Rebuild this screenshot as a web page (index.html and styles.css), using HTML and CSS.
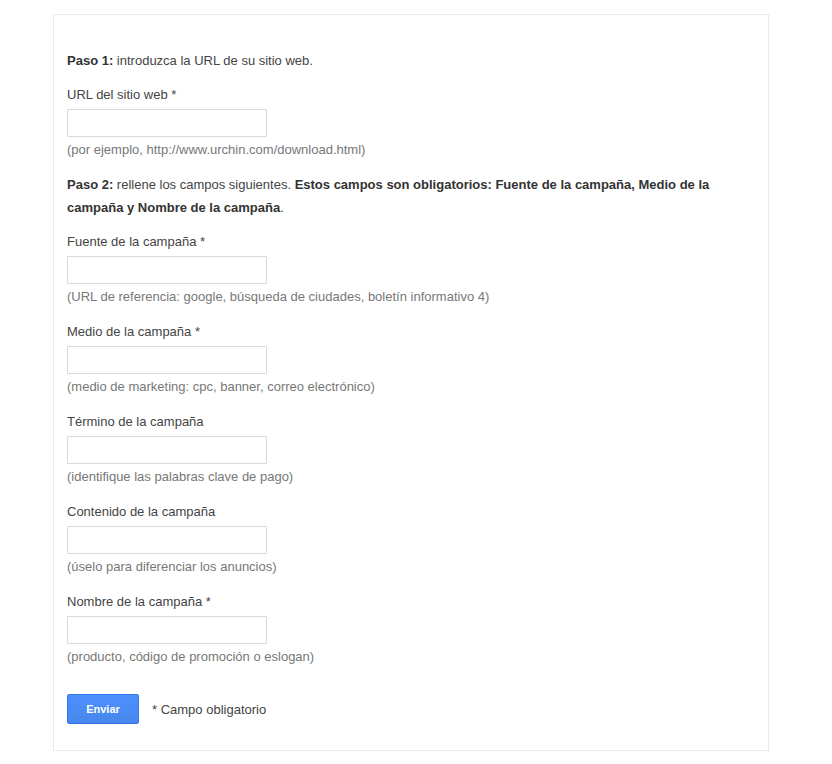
FILE: index.html
```html
<!DOCTYPE html>
<html lang="es">
<head>
<meta charset="utf-8">
<title>Creador de URL</title>
<link rel="stylesheet" href="styles.css">
</head>
<body>
<div class="panel">
  <form class="builder" onsubmit="return false;">
    <p class="step"><b>Paso 1:</b> introduzca la URL de su sitio web.</p>

    <div class="field field--tight">
      <label class="field-label" for="url">URL del sitio web *</label>
      <input class="field-input" id="url" type="text">
      <div class="field-hint">(por ejemplo, http://www.urchin.com/download.html)</div>
    </div>

    <p class="step"><b>Paso 2:</b> rellene los campos siguientes. <b>Estos campos son obligatorios: Fuente de la campaña, Medio de la campaña y Nombre de la campaña</b>.</p>

    <div class="field">
      <label class="field-label" for="source">Fuente de la campaña *</label>
      <input class="field-input" id="source" type="text">
      <div class="field-hint">(URL de referencia: google, búsqueda de ciudades, boletín informativo 4)</div>
    </div>

    <div class="field">
      <label class="field-label" for="medium">Medio de la campaña *</label>
      <input class="field-input" id="medium" type="text">
      <div class="field-hint">(medio de marketing: cpc, banner, correo electrónico)</div>
    </div>

    <div class="field">
      <label class="field-label" for="term">Término de la campaña</label>
      <input class="field-input" id="term" type="text">
      <div class="field-hint">(identifique las palabras clave de pago)</div>
    </div>

    <div class="field">
      <label class="field-label" for="content">Contenido de la campaña</label>
      <input class="field-input" id="content" type="text">
      <div class="field-hint">(úselo para diferenciar los anuncios)</div>
    </div>

    <div class="field">
      <label class="field-label" for="name">Nombre de la campaña *</label>
      <input class="field-input" id="name" type="text">
      <div class="field-hint">(producto, código de promoción o eslogan)</div>
    </div>

    <div class="actions">
      <button class="btn-submit" type="submit">Enviar</button>
      <span class="required-note">* Campo obligatorio</span>
    </div>
  </form>
</div>
</body>
</html>
```

FILE: styles.css
```css
html, body {
  margin: 0;
  padding: 0;
  background: #fff;
}

body {
  font-family: Arial, "Liberation Sans", sans-serif;
  font-size: 13px;
  color: #444;
}

.panel {
  width: 714px;
  margin: 14px 0 0 53px;
  border: 1px solid #e6eaea;
  box-sizing: content-box;
}

.builder {
  padding: 34px 14px 26px 13px;
}

.step {
  margin: 0 0 13px;
  line-height: 23px;
  color: #444;
}

.step b {
  color: #333;
}

.field {
  margin-bottom: 15px;
}

.field--tight {
  margin-bottom: 13px;
}

.field-label {
  display: block;
  line-height: 20px;
  margin-bottom: 4px;
  color: #444;
}

.field-input {
  display: block;
  box-sizing: border-box;
  width: 200px;
  height: 28px;
  margin: 0;
  padding: 0 8px;
  border: 1px solid #d9d9d9;
  border-radius: 1px;
  background: #fff;
  font: inherit;
}

.field-hint {
  margin-top: 3px;
  line-height: 20px;
  color: #777;
}

/* margins collapse with the last field, so this is the full gap */
.actions {
  display: flex;
  align-items: center;
  gap: 13px;
  margin-top: 27px;
}

.btn-submit {
  box-sizing: border-box;
  width: 72px;
  height: 30px;
  padding: 0;
  border: 1px solid #3079ed;
  border-radius: 2px;
  background: linear-gradient(#4d90fe, #4787ed);
  color: #fff;
  font-family: Arial, "Liberation Sans", sans-serif;
  font-size: 11px;
  font-weight: bold;
  cursor: pointer;
}

.required-note {
  color: #444;
}
```
